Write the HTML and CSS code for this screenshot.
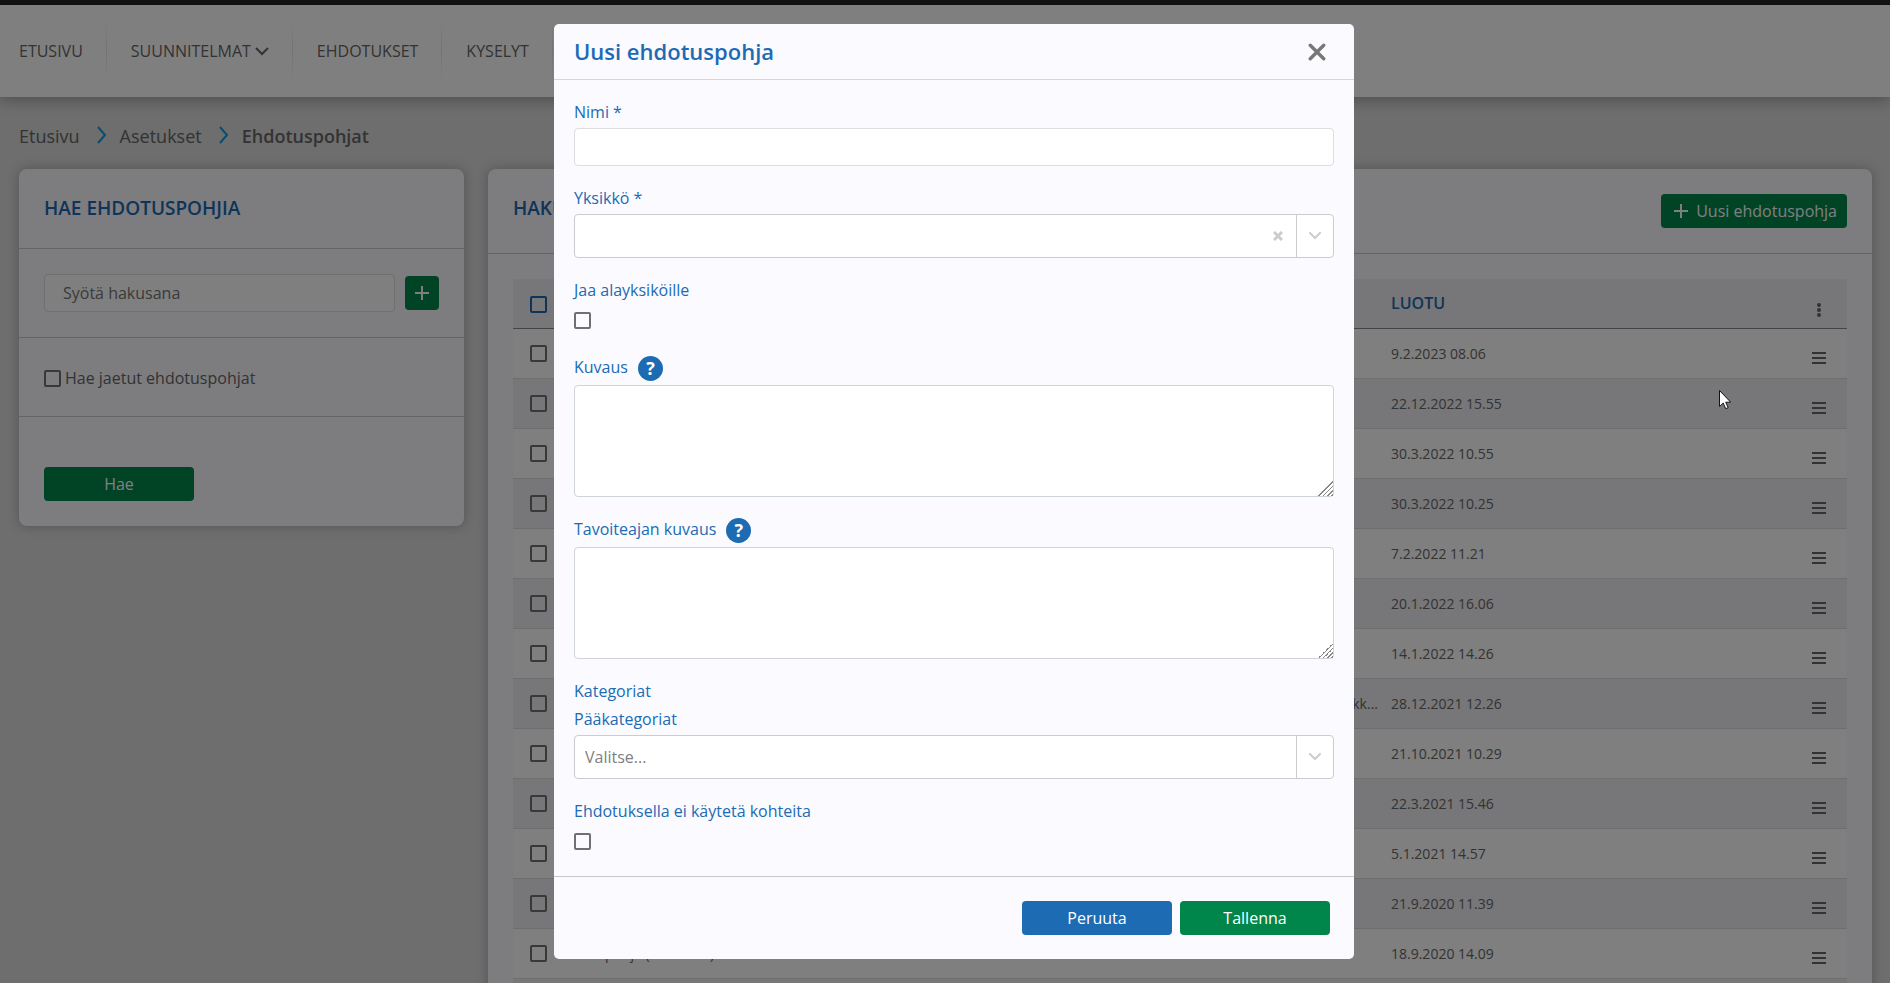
FILE: index.html
```html
<!DOCTYPE html>
<html lang="fi">
<head>
    <meta charset="UTF-8">
    <meta name="viewport" content="width=device-width, initial-scale=1.0">
    <title>Ehdotuspohjat</title>
    <link rel="stylesheet" href="styles.css">
</head>
<body>
    <header class="topbar">
        <nav class="nav">
            <a href="#">ETUSIVU</a>
            <a href="#">SUUNNITELMAT
                <svg class="nav-arrow" viewBox="0 0 14 9"><path d="M1 1l6 6 6-6"/></svg>
            </a>
            <a href="#">EHDOTUKSET</a>
            <a href="#">KYSELYT</a>
        </nav>
    </header>

    <nav class="breadcrumb">
        <a href="#">Etusivu</a>
        <svg class="crumb-arrow" viewBox="0 0 10 18"><path d="M1 1l7 8-7 8"/></svg>
        <a href="#">Asetukset</a>
        <svg class="crumb-arrow" viewBox="0 0 10 18"><path d="M1 1l7 8-7 8"/></svg>
        <strong>Ehdotuspohjat</strong>
    </nav>

    <main class="content">
        <form class="card search">
            <h2>HAE EHDOTUSPOHJIA</h2>
            <div class="search-row">
                <input type="text" class="text-input" placeholder="Syötä hakusana" aria-label="Syötä hakusana">
                <button type="button" class="btn btn-green btn-plus" aria-label="Lisää">
                    <svg class="plus" viewBox="0 0 14 14"><path d="M7 0v14M0 7h14"/></svg>
                </button>
            </div>
            <div class="shared-row">
                <input type="checkbox" id="shared">
                <label for="shared">Hae jaetut ehdotuspohjat</label>
            </div>
            <div class="submit-row">
                <button type="button" class="btn btn-green">Hae</button>
            </div>
        </form>

        <section class="card results">
            <div class="results-head">
                <h2>HAKUTULOKSET</h2>
                <button type="button" class="btn btn-green btn-new">
                    <svg class="plus" viewBox="0 0 14 14"><path d="M7 0v14M0 7h14"/></svg>
                    Uusi ehdotuspohja
                </button>
            </div>
            <table>
                <thead>
                    <tr>
                        <th class="col-check"><input type="checkbox" aria-label="Valitse kaikki"></th>
                        <th class="col-name">NIMI</th>
                        <th class="col-unit">YKSIKKÖ</th>
                        <th>LUOTU</th>
                        <th class="col-menu"><button type="button" class="icon-btn" aria-label="Sarakkeet"><svg class="dots" viewBox="0 0 4 14"><circle cx="2" cy="2" r="2"/><circle cx="2" cy="7" r="2"/><circle cx="2" cy="12" r="2"/></svg></button></th>
                    </tr>
                </thead>
                <tbody id="rows"></tbody>
            </table>
        </section>
    </main>

    <div class="backdrop">
        <form class="modal" role="dialog" aria-labelledby="modalTitle">
            <div class="modal-head">
                <h1 id="modalTitle">Uusi ehdotuspohja</h1>
                <button type="button" class="close" aria-label="Sulje">
                    <svg viewBox="0 0 16 16"><path d="M2 2l12 12M14 2L2 14"/></svg>
                </button>
            </div>
            <div class="modal-body">
                <div class="field">
                    <label for="name">Nimi *</label>
                    <input type="text" class="text-input" id="name">
                </div>
                <div class="field">
                    <label for="unit">Yksikkö *</label>
                    <div class="select">
                        <select id="unit"><option></option></select>
                        <button type="button" class="clear" aria-label="Tyhjennä">
                            <svg viewBox="0 0 10 10"><path d="M1 1l8 8M9 1L1 9"/></svg>
                        </button>
                        <span class="arrow"><svg viewBox="0 0 12 8"><path d="M1 1l5 5 5-5"/></svg></span>
                    </div>
                </div>
                <div class="field field-check">
                    <label for="share">Jaa alayksiköille</label>
                    <input type="checkbox" id="share">
                </div>
                <div class="field">
                    <div class="label-row">
                        <label for="desc">Kuvaus</label>
                        <button type="button" class="help" aria-label="Ohje">?</button>
                    </div>
                    <textarea id="desc"></textarea>
                </div>
                <div class="field">
                    <div class="label-row">
                        <label for="target">Tavoiteajan kuvaus</label>
                        <button type="button" class="help" aria-label="Ohje">?</button>
                    </div>
                    <textarea id="target"></textarea>
                </div>
                <div class="field">
                    <span class="group-label">Kategoriat</span>
                    <label for="category">Pääkategoriat</label>
                    <div class="select">
                        <select id="category"><option>Valitse...</option></select>
                        <span class="arrow"><svg viewBox="0 0 12 8"><path d="M1 1l5 5 5-5"/></svg></span>
                    </div>
                </div>
                <div class="field field-check">
                    <label for="noTargets">Ehdotuksella ei käytetä kohteita</label>
                    <input type="checkbox" id="noTargets">
                </div>
            </div>
            <div class="modal-foot">
                <button type="button" class="btn btn-blue">Peruuta</button>
                <button type="button" class="btn btn-green">Tallenna</button>
            </div>
        </form>
    </div>

    <svg class="cursor" viewBox="0 0 12 20"><path d="M.5 .5v16l3.700-3.500 2.500 5.700 2.500-1.100-2.500-5.400h5z"/></svg>

    <script>
        const rows = [
            ['', '', '9.2.2023 08.06'],
            ['', '', '22.12.2022 15.55'],
            ['', '', '30.3.2022 10.55'],
            ['', '', '30.3.2022 10.25'],
            ['', '', '7.2.2022 11.21'],
            ['', '', '20.1.2022 16.06'],
            ['', '', '14.1.2022 14.26'],
            ['', 'Yksikk...', '28.12.2021 12.26'],
            ['', '', '21.10.2021 10.29'],
            ['', '', '22.3.2021 15.46'],
            ['', '', '5.1.2021 14.57'],
            ['', '', '21.9.2020 11.39'],
            ['Hankepohja (tarkastus)', '', '18.9.2020 14.09'],
            ['', '', '']
        ];

        document.getElementById('rows').innerHTML = rows.map(([name, unit, created]) => `
            <tr>
                <td class="col-check"><input type="checkbox" aria-label="Valitse rivi"></td>
                <td>${name}</td>
                <td class="col-unit">${unit}</td>
                <td>${created}</td>
                <td class="col-menu"><button type="button" class="icon-btn" aria-label="Toiminnot"><svg class="bars" viewBox="0 0 14 12"><path d="M0 1h14M0 6h14M0 11h14"/></svg></button></td>
            </tr>`).join('');
    </script>
</body>
</html>
```
FILE: styles.css
```css
* {
    box-sizing: border-box;
}
body {
    margin: 0;
    height: 100vh;
    overflow: hidden;
    background-color: #dcdcdc;
    color: #666;
    font-family: "Open Sans", "Noto Sans", sans-serif;
    font-size: 16px;
    line-height: 24px;
}
a {
    color: inherit;
    text-decoration: none;
}
h1, h2 {
    margin: 0;
    color: #1c6bb3;
    font-weight: 600;
}
h2 {
    font-size: 19px;
    line-height: 29px;
}
svg {
    display: block;
    fill: none;
    stroke: currentColor;
}
button, input, select, textarea {
    font: inherit;
    color: inherit;
}
button {
    cursor: pointer;
}
input[type="checkbox"] {
    appearance: none;
    display: block;
    flex: none;
    width: 17px;
    height: 17px;
    margin: 0;
    border: 2px solid #707070;
    border-radius: 2px;
}

/* top navigation */
.topbar {
    height: 97px;
    padding: 16px 0 0 19px;
    background-color: #fff;
    border-top: 5px solid #242424;
    box-shadow: 0 3px 14px rgba(0, 0, 0, 0.3);
}
.nav {
    display: flex;
}
.nav a {
    display: flex;
    align-items: center;
    gap: 4px;
    height: 60px;
    margin-right: 24px;
    padding-right: 23px;
    border-right: 1px solid;
    border-image: linear-gradient(transparent, #e4e4e4, transparent) 1;
}
.nav-arrow {
    width: 14px;
    height: 9px;
    stroke-width: 2;
}

.breadcrumb {
    display: flex;
    align-items: center;
    padding: 24px 19px 18px;
    font-size: 18px;
    line-height: 30px;
}
.breadcrumb strong {
    font-weight: 600;
}
.crumb-arrow {
    width: 10px;
    height: 18px;
    margin: 0 13px 2px 17px;
    color: #0d9ddb;
    stroke-width: 2;
}

/* cards */
.content {
    display: grid;
    grid-template-columns: 445px 1fr;
    gap: 24px;
    align-items: start;
    padding: 0 18px 0 19px;
}
.card {
    background-color: #fafaff;
    border-radius: 8px;
    box-shadow: 0 0 12px rgba(0, 0, 0, 0.25);
}
.text-input {
    width: 100%;
    height: 38px;
    padding: 0 18px;
    background-color: #fff;
    border: 1px solid #dedede;
    border-radius: 4px;
}
.search .text-input::placeholder {
    color: #757575;
    opacity: 1;
}
.search h2 {
    padding: 25px;
    border-bottom: 1px solid #c8c8cc;
}
.search-row {
    display: flex;
    align-items: center;
    gap: 10px;
    padding: 25px;
    border-bottom: 1px solid #c8c8cc;
}
.shared-row {
    display: flex;
    align-items: center;
    gap: 4px;
    height: 79px;
    padding: 2px 25px 0;
    border-bottom: 1px solid #c8c8cc;
}
.submit-row {
    padding: 50px 25px 25px;
}
.btn {
    min-width: 150px;
    height: 34px;
    padding: 0 10px;
    color: #fff;
    border: none;
    border-radius: 4px;
}
.btn-green {
    background-color: #00864b;
}
.btn-blue {
    background-color: #1c6bb3;
}
.plus {
    width: 14px;
    height: 14px;
    stroke-width: 2;
}
.btn-plus {
    min-width: 34px;
}
.btn-new {
    display: flex;
    align-items: center;
    gap: 8px;
    padding: 0 10px 0 13px;
}
.results-head {
    display: flex;
    justify-content: space-between;
    align-items: flex-start;
    padding: 25px;
    border-bottom: 1px solid #c8c8cc;
}

/* results table */
table {
    width: calc(100% - 50px);
    margin: 25px;
    border-collapse: separate;
    border-spacing: 0;
    table-layout: fixed;
    font-size: 14px;
}
th, td {
    height: 50px;
    padding: 0;
    text-align: left;
    white-space: nowrap;
    background-color: #fff;
    border-bottom: 1px solid #dcdcdc;
}
th {
    padding-bottom: 1px;
    color: #1c6bb3;
    font-size: 16px;
    font-weight: 600;
    background-color: #eeeef2;
    border-bottom-color: #888;
}
th input[type="checkbox"] {
    border-color: #1c6bb3;
    margin-top: 2px;
}
tr:nth-child(even) td {
    background-color: #eeeef2;
}
.col-check {
    width: 50px;
    padding-left: 17px;
}
.col-name {
    width: 420px;
}
.col-unit {
    width: 408px;
}
td.col-unit {
    padding-right: 13px;
    text-align: right;
}
.col-menu {
    width: 50px;
}
.icon-btn {
    display: flex;
    justify-content: center;
    width: 44px;
    margin-top: 8px;
    padding: 0;
    background: none;
    border: none;
    color: #666;
}
th .icon-btn {
    margin-top: 14px;
}
.dots {
    width: 4px;
    height: 14px;
    fill: currentColor;
    stroke: none;
}
.bars {
    width: 14px;
    height: 12px;
    stroke-width: 2;
}

/* modal */
.backdrop {
    position: fixed;
    inset: 0;
    display: flex;
    justify-content: center;
    align-items: flex-start;
    padding: 24px 0 24px 18px;
    background-color: rgba(0, 0, 0, 0.5);
}
.modal {
    width: 800px;
    background-color: #fafaff;
    border-radius: 5px;
    color: #1c6bb3;
}
.modal-head {
    display: flex;
    justify-content: space-between;
    align-items: center;
    height: 56px;
    padding: 0 28px 0 20px;
    border-bottom: 1px solid #d5d5da;
}
.modal-head h1 {
    font-size: 22px;
    line-height: 32px;
    padding-bottom: 2px;
}
.close {
    padding: 0;
    background: none;
    border: none;
    color: #777;
}
.close svg {
    width: 18px;
    height: 18px;
    stroke-width: 3;
    stroke-linecap: round;
}
.modal-body {
    display: flex;
    flex-direction: column;
    gap: 20px;
    padding: 20px;
}
.field label, .group-label {
    display: block;
    height: 28px;
}
.field-check {
    height: 57px;
}
.field-check input {
    margin-top: 6px;
}
.select {
    display: flex;
    height: 44px;
    background-color: #fff;
    border: 1px solid #ccc;
    border-radius: 4px;
    color: #808080;
}
.select select {
    flex: 1;
    appearance: none;
    padding: 0 10px;
    background: none;
    border: none;
}
.clear {
    padding: 0 13px;
    background: none;
    border: none;
    color: #ccc;
}
.clear svg {
    width: 10px;
    height: 10px;
    stroke-width: 3;
}
.arrow {
    display: flex;
    justify-content: center;
    align-items: center;
    width: 37px;
    border-left: 1px solid #ccc;
    color: #ccc;
}
.arrow svg {
    width: 12px;
    height: 8px;
    stroke-width: 2;
    stroke-linecap: round;
}
.label-row {
    display: flex;
    gap: 10px;
    height: 30px;
}
.help {
    width: 25px;
    height: 25px;
    margin-top: 1px;
    padding: 0;
    background-color: #1c6bb3;
    border: none;
    border-radius: 50%;
    color: #fff;
    font-size: 18px;
    font-weight: 700;
    line-height: 25px;
}
textarea {
    display: block;
    width: 100%;
    height: 112px;
    background-color: #fff;
    border: 1px solid #ced4da;
    border-radius: 4px;
}
textarea::-webkit-resizer {
    background: linear-gradient(135deg,
        transparent 50%, #888 50% 56%,
        transparent 56% 64%, #888 64% 70%,
        transparent 70% 78%, #888 78% 84%,
        transparent 84% 91%, #888 91% 97%, transparent 97%);
}
.modal-foot {
    display: flex;
    justify-content: flex-end;
    gap: 8px;
    padding: 24px;
    border-top: 1px solid #c8c8cc;
}

/* pointer lies over the page */
.cursor {
    position: fixed;
    left: 1719px;
    top: 390px;
    width: 12px;
    height: 20px;
    fill: #fff;
    stroke: #112;
}
```
